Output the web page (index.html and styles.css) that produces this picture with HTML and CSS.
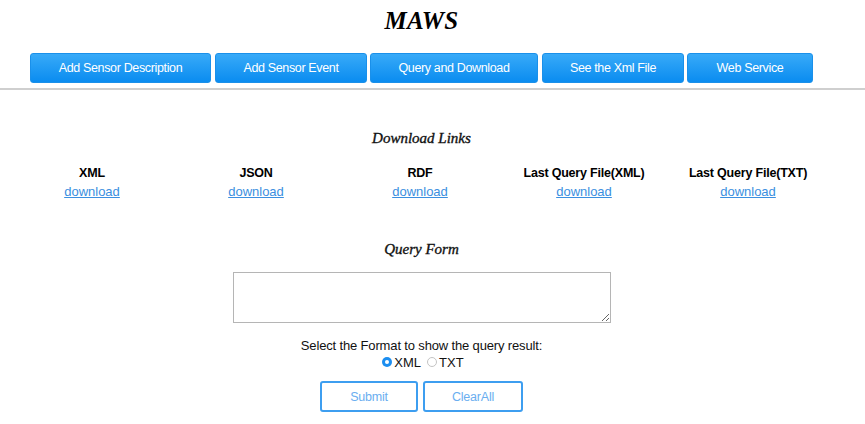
FILE: index.html
```html
<!DOCTYPE html>
<html>
<head>
<meta charset="utf-8">
<link rel="stylesheet" href="styles.css">
</head>
<body>
<header class="top">
  <h1 class="title">MAWS</h1>
  <nav class="nav">
    <a class="nav-btn w1">Add Sensor Description</a>
    <a class="nav-btn w2">Add Sensor Event</a>
    <a class="nav-btn w3">Query and Download</a>
    <a class="nav-btn w4">See the Xml File</a>
    <a class="nav-btn w5">Web Service</a>
  </nav>
</header>
<main class="wrap">
  <h2 class="section-title links-title">Download Links</h2>
  <div class="links">
    <div class="link-col"><div class="link-head">XML</div><a class="dl" href="#">download</a></div>
    <div class="link-col"><div class="link-head">JSON</div><a class="dl" href="#">download</a></div>
    <div class="link-col"><div class="link-head">RDF</div><a class="dl" href="#">download</a></div>
    <div class="link-col"><div class="link-head">Last Query File(XML)</div><a class="dl" href="#">download</a></div>
    <div class="link-col"><div class="link-head">Last Query File(TXT)</div><a class="dl" href="#">download</a></div>
  </div>
  <h2 class="section-title form-title">Query Form</h2>
  <form class="qform">
    <textarea class="query"></textarea>
    <div class="fmt-label">Select the Format to show the query result:</div>
    <div class="radios">
      <span class="radio on"></span><span class="rlabel">XML</span>
      <span class="radio"></span><span class="rlabel">TXT</span>
    </div>
    <div class="actions">
      <button type="button" class="obtn submit">Submit</button>
      <button type="button" class="obtn clear">ClearAll</button>
    </div>
  </form>
</main>
</body>
</html>
```
FILE: styles.css
```css
html, body {
  margin: 0;
  padding: 0;
  background: #fff;
}
body {
  font-family: "Liberation Sans", Arial, sans-serif;
  color: #111;
  width: 865px;
}
.top {
  border-bottom: 2px solid #cfcfcf;
  padding-bottom: 5px;
}
.title {
  margin: 0;
  width: 843px;
  padding-top: 6px;
  text-align: center;
  font-family: "Liberation Serif", "Times New Roman", serif;
  font-style: italic;
  font-weight: bold;
  font-size: 25px;
  line-height: 30px;
  letter-spacing: 0.3px;
  color: #000;
}
.nav {
  display: flex;
  padding-left: 30px;
  margin-top: 17px;
}
.nav-btn {
  display: flex;
  align-items: center;
  justify-content: center;
  height: 30px;
  box-sizing: border-box;
  border: 1px solid #1a90ea;
  border-radius: 3px;
  background: linear-gradient(#38aaf8, #0a8cf0);
  color: #fff;
  font-size: 12.5px;
  letter-spacing: -0.35px;
  cursor: pointer;
}
.w1 { width: 181px; }
.w2 { width: 152px; margin-left: 4px; }
.w3 { width: 168px; margin-left: 3px; }
.w4 { width: 142px; margin-left: 4px; }
.w5 { width: 126px; margin-left: 3px; }
.wrap {
  width: 843px;
}
.section-title {
  margin: 0;
  text-align: center;
  font-family: "Liberation Serif", "Times New Roman", serif;
  font-style: italic;
  font-weight: normal;
  font-size: 15px;
  line-height: 20px;
  color: #111;
  -webkit-text-stroke: 0.35px #111;
}
.links-title { margin-top: 38px; }
.links {
  display: grid;
  grid-template-columns: repeat(5, 164px);
  padding-left: 10px;
  margin-top: 16px;
}
.link-col {
  display: flex;
  flex-direction: column;
  align-items: center;
}
.link-head {
  font-weight: bold;
  font-size: 12.5px;
  letter-spacing: -0.2px;
  line-height: 18px;
  color: #000;
}
.dl {
  margin-top: 1px;
  font-size: 13px;
  line-height: 18px;
  color: #3b8fe0;
  text-decoration: underline;
}
.form-title { margin-top: 38px; }
.qform {
  display: flex;
  flex-direction: column;
  align-items: center;
}
.query {
  margin-top: 13px;
  width: 378px;
  height: 51px;
  box-sizing: border-box;
  border: 1px solid #b5b5b5;
  resize: both;
  padding: 2px;
}
.fmt-label {
  margin-top: 14px;
  font-size: 13px;
  letter-spacing: -0.15px;
  line-height: 18px;
  color: #111;
}
.radios {
  display: flex;
  align-items: center;
  margin-top: -2px;
  margin-left: 3px;
  height: 18px;
  font-size: 13px;
}
.radio {
  width: 10px;
  height: 10px;
  box-sizing: border-box;
  border-radius: 50%;
  border: 1px solid #c4c4c4;
  background: #fff;
  margin-right: 2px;
  position: relative;
}
.radio.on {
  border: none;
  background: #1c8ef0;
}
.radio.on::after {
  content: "";
  position: absolute;
  left: 3px;
  top: 3px;
  width: 4px;
  height: 4px;
  border-radius: 50%;
  background: #fff;
}
.rlabel { margin-right: 6px; color: #111; }
.rlabel:last-child { margin-right: 0; }
.actions {
  display: flex;
  gap: 5px;
  margin-top: 10px;
}
.obtn {
  height: 31px;
  box-sizing: border-box;
  border: 2px solid #3d9ef0;
  border-radius: 3px;
  background: #fff;
  color: #6aaef0;
  font-family: "Liberation Sans", Arial, sans-serif;
  font-size: 12.5px;
  letter-spacing: -0.2px;
  padding: 0;
}
.submit { width: 98px; }
.clear { width: 100px; }
```
